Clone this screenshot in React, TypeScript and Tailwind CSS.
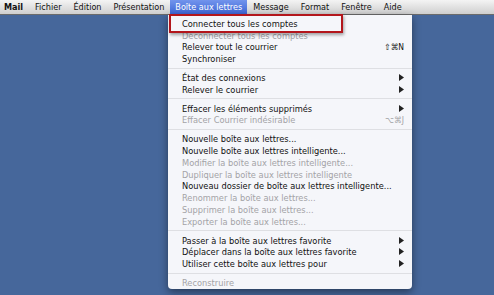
const font = { fontFamily: '"DejaVu Sans Condensed", "DejaVu Sans", sans-serif' };

type Item =
  | { kind: 'sep' }
  | { kind: 'item'; label: string; disabled?: boolean; shortcut?: string; submenu?: boolean };

const items: Item[] = [
  { kind: 'item', label: 'Connecter tous les comptes' },
  { kind: 'item', label: 'Déconnecter tous les comptes', disabled: true },
  { kind: 'item', label: 'Relever tout le courrier', shortcut: '⇧⌘N' },
  { kind: 'item', label: 'Synchroniser' },
  { kind: 'sep' },
  { kind: 'item', label: 'État des connexions', submenu: true },
  { kind: 'item', label: 'Relever le courrier', submenu: true },
  { kind: 'sep' },
  { kind: 'item', label: 'Effacer les éléments supprimés', submenu: true },
  { kind: 'item', label: 'Effacer Courrier indésirable', disabled: true, shortcut: '⌥⌘J' },
  { kind: 'sep' },
  { kind: 'item', label: 'Nouvelle boîte aux lettres...' },
  { kind: 'item', label: 'Nouvelle boîte aux lettres intelligente...' },
  { kind: 'item', label: 'Modifier la boîte aux lettres intelligente...', disabled: true },
  { kind: 'item', label: 'Dupliquer la boîte aux lettres intelligente', disabled: true },
  { kind: 'item', label: 'Nouveau dossier de boîte aux lettres intelligente...' },
  { kind: 'item', label: 'Renommer la boîte aux lettres...', disabled: true },
  { kind: 'item', label: 'Supprimer la boîte aux lettres...', disabled: true },
  { kind: 'item', label: 'Exporter la boîte aux lettres...', disabled: true },
  { kind: 'sep' },
  { kind: 'item', label: 'Passer à la boîte aux lettres favorite', submenu: true },
  { kind: 'item', label: 'Déplacer dans la boîte aux lettres favorite', submenu: true },
  { kind: 'item', label: 'Utiliser cette boîte aux lettres pour', submenu: true },
  { kind: 'sep' },
  { kind: 'item', label: 'Reconstruire', disabled: true },
];

const menus = ['Fichier', 'Édition', 'Présentation', 'Boîte aux lettres', 'Message', 'Format', 'Fenêtre', 'Aide'];

function Arrow() {
  return (
    <svg width="5" height="7" viewBox="0 0 5 7" className="ml-auto">
      <path d="M0 0 L5 3.5 L0 7 Z" fill="#222" />
    </svg>
  );
}

export default function App() {
  return (
    <div className="relative w-[494px] h-[295px] overflow-hidden bg-[#46679b]" style={font}>
      {/* menu bar */}
      <div className="flex items-stretch h-[15px] bg-gradient-to-b from-[#f4f4f4] to-[#cfcfcf] border-b border-[#6b6b6b] text-[9px] leading-none text-[#111]">
        <div className="flex items-center pl-[4px] pr-[6px] font-bold">Mail</div>
        {menus.map((m) =>
          m === 'Boîte aux lettres' ? (
            <div
              key={m}
              className="flex items-center px-[5px] bg-gradient-to-b from-[#7294ec] to-[#3e66d6] text-white"
            >
              {m}
            </div>
          ) : (
            <div key={m} className="flex items-center px-[6px]">
              {m}
            </div>
          )
        )}
      </div>

      {/* dropdown */}
      <div className="absolute left-[168px] top-[15px] w-[244px] pt-[2.5px] pb-[1px] bg-[#f5f6fa] rounded-b-[4px] shadow-[0_3px_8px_rgba(0,0,0,0.45)] text-[9.2px] leading-none">
        {items.map((it, i) =>
          it.kind === 'sep' ? (
            <div key={i} className="h-[7px] flex items-center">
              <div className="w-full h-px bg-[#dedfe3]" />
            </div>
          ) : (
            <div
              key={i}
              className={`flex items-center h-[11.8px] pl-[14px] pr-[8px] ${
                it.disabled ? 'text-[#a3a3a6]' : 'text-[#111]'
              }`}
            >
              <span className="whitespace-nowrap">{it.label}</span>
              {it.shortcut && (
                <span className="ml-auto whitespace-nowrap text-[8.5px]">{it.shortcut}</span>
              )}
              {it.submenu && <Arrow />}
            </div>
          )
        )}
      </div>

      {/* highlight box */}
      <div className="absolute left-[169px] top-[14px] w-[174px] h-[19px] border-2 border-[#b3161c] shadow-[1px_2px_3px_rgba(0,0,0,0.35)]" />
    </div>
  );
}
